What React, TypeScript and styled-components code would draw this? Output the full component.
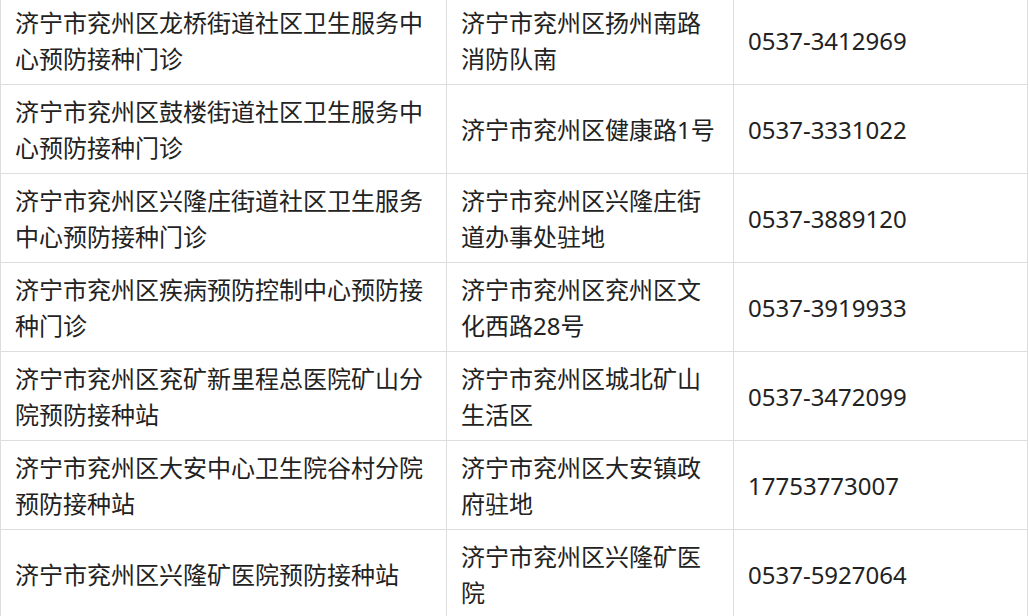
import React from "react";
import styled, { createGlobalStyle } from "styled-components";

const GlobalStyle = createGlobalStyle`
	html, body {
		margin: 0;
		padding: 0;
		background: #fff;
	}
	body {
		font-family: "Noto Sans", "Noto Sans CJK SC", sans-serif;
		color: #222;
	}
`;

interface iClinic {
	name: string;
	address: string;
	phone: string;
}

const clinics: iClinic[] = [
	{
		name: "济宁市兖州区龙桥街道社区卫生服务中心预防接种门诊",
		address: "济宁市兖州区扬州南路消防队南",
		phone: "0537-3412969",
	},
	{
		name: "济宁市兖州区鼓楼街道社区卫生服务中心预防接种门诊",
		address: "济宁市兖州区健康路1号",
		phone: "0537-3331022",
	},
	{
		name: "济宁市兖州区兴隆庄街道社区卫生服务中心预防接种门诊",
		address: "济宁市兖州区兴隆庄街道办事处驻地",
		phone: "0537-3889120",
	},
	{
		name: "济宁市兖州区疾病预防控制中心预防接种门诊",
		address: "济宁市兖州区兖州区文化西路28号",
		phone: "0537-3919933",
	},
	{
		name: "济宁市兖州区兖矿新里程总医院矿山分院预防接种站",
		address: "济宁市兖州区城北矿山生活区",
		phone: "0537-3472099",
	},
	{
		name: "济宁市兖州区大安中心卫生院谷村分院预防接种站",
		address: "济宁市兖州区大安镇政府驻地",
		phone: "17753773007",
	},
	{
		name: "济宁市兖州区兴隆矿医院预防接种站",
		address: "济宁市兖州区兴隆矿医院",
		phone: "0537-5927064",
	},
];

const App: React.FC = () => {
	return (
		<Container>
			<GlobalStyle />
			<Table>
				<colgroup>
					<Col width={446} />
					<Col width={287} />
					<Col width={294} />
				</colgroup>
				<tbody>
					{clinics.map((c) => (
						<Row key={c.phone}>
							<Cell>{c.name}</Cell>
							<Cell>{c.address}</Cell>
							<Cell>{c.phone}</Cell>
						</Row>
					))}
				</tbody>
			</Table>
		</Container>
	);
};

export default App;

const Container = styled.div`
	width: 1029px;
	height: 616px;
	overflow: hidden;
`;

const Table = styled.table`
	margin-top: -5px;
	border-collapse: collapse;
	table-layout: fixed;
	width: 1027px;
`;

const Col = styled.col<{ width: number }>`
	width: ${(p) => p.width}px;
`;

const Row = styled.tr`
	height: 89px;
`;

const Cell = styled.td`
	border: 1px solid #ddd;
	padding: 9px 15px 7px 14px;
	font-size: 24px;
	line-height: 36px;
	vertical-align: middle;
	word-break: break-all;
`;
